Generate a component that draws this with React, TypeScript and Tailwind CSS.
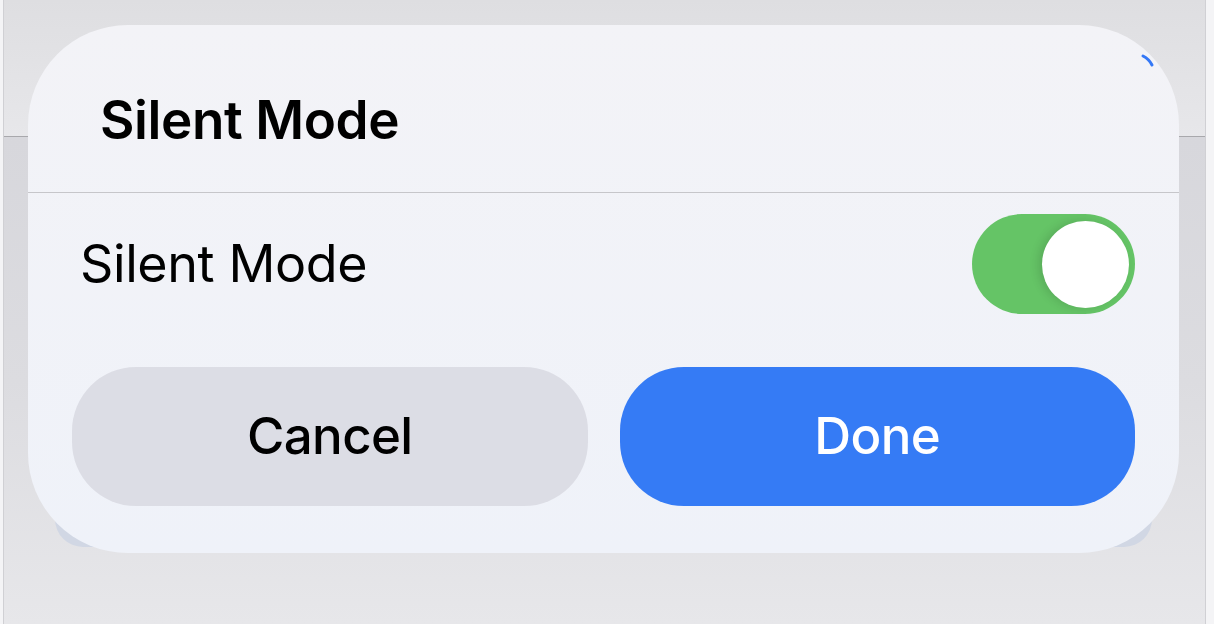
import React from 'react';

const font = { fontFamily: 'Inter, "Noto Sans", "Liberation Sans", sans-serif' };

function Toggle() {
  return (
    <div className="flex h-[100px] w-[163px] shrink-0 items-center justify-end rounded-full bg-[#65c466] pr-[6px]">
      <div className="h-[87px] w-[87px] rounded-full bg-white shadow-[-4px_0_10px_rgba(0,0,0,0.12)]" />
    </div>
  );
}

export default function App() {
  return (
    <div className="relative flex h-[624px] w-[1214px] overflow-hidden bg-[#f4f4f6]" style={font}>
      {/* background sheet */}
      <div className="ml-[3px] mr-[8px] flex flex-1 flex-col border-x border-[#d0d0d4]">
        <div className="h-[137px] border-b border-[#a8a8ac] bg-gradient-to-b from-[#dedee1] to-[#e7e7ea]" />
        <div className="flex-1 bg-gradient-to-b from-[#d7d7dc] via-[#dcdce0] to-[#e7e7ea]" />
      </div>

      {/* card behind the dialog */}
      <div className="absolute left-[55px] top-[70px] h-[477px] w-[1097px] rounded-[28px] bg-[#d1d7e4]" />

      {/* dialog */}
      <div className="absolute left-[28px] top-[25px] flex h-[528px] w-[1151px] flex-col rounded-[100px] bg-gradient-to-b from-[#f3f3f7] to-[#eff2f9] text-black">
        <div className="h-[168px] shrink-0 border-b border-[#c6c6ca] pl-[72px] pt-[68px]">
          <h1 className="text-[53px] font-semibold leading-[54px] tracking-[-0.4px]">Silent Mode</h1>
        </div>

        <div className="flex items-center justify-between pl-[52px] pr-[44px] pt-[21px] pb-[53px]">
          <span className="text-[52px] leading-[54px] tracking-[-0.4px]">Silent Mode</span>
          <Toggle />
        </div>

        <div className="flex gap-[32px] px-[44px]">
          <button className="flex h-[139px] flex-1 items-center justify-center rounded-[64px] bg-[#dcdde5] text-[51px] font-medium tracking-[-0.6px] text-black">
            Cancel
          </button>
          <button className="flex h-[139px] flex-1 items-center justify-center rounded-[64px] bg-[#357bf5] text-[51px] font-medium tracking-[-0.6px] text-white">
            Done
          </button>
        </div>
      </div>

      {/* sliver of a blue control peeking past the dialog corner */}
      <svg className="absolute left-[1138px] top-[52px]" width="20" height="20" viewBox="0 0 20 20">
        <path d="M5 4 Q11 7 14 13" fill="none" stroke="#3478f6" strokeWidth="3" strokeLinecap="round" />
      </svg>
    </div>
  );
}
